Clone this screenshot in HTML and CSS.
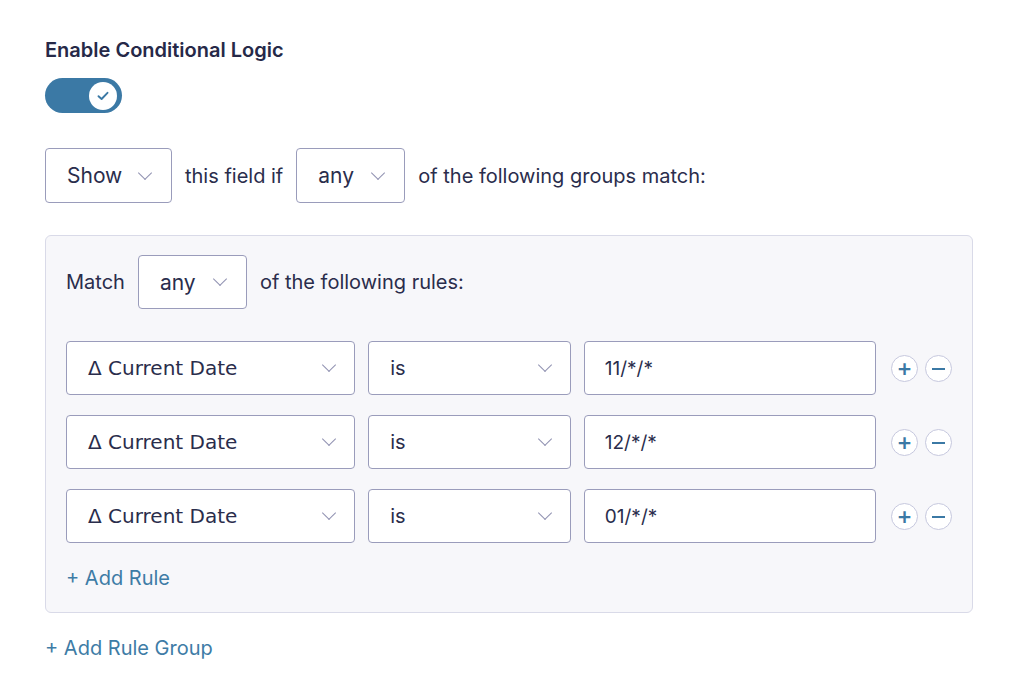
FILE: index.html
```html
<!DOCTYPE html>
<html lang="en">
<head>
    <meta charset="UTF-8">
    <title>Conditional Logic</title>
    <link rel="stylesheet" href="styles.css">
</head>
<body>
    <div class="panel">
        <div class="setting-label">Enable Conditional Logic</div>
        <div class="toggle">
            <span class="knob">
                <svg width="12" height="10" viewBox="0 0 12 10"><path d="M1.5 5.2 L4.6 8 L10.5 1.8" fill="none" stroke="#3b79a5" stroke-width="1.9" stroke-linecap="round" stroke-linejoin="round"/></svg>
            </span>
        </div>

        <div class="sentence">
            <div class="select select-show">Show<span class="chev"></span></div>
            <span class="words">this field if</span>
            <div class="select select-any">any<span class="chev"></span></div>
            <span class="words">of the following groups match:</span>
        </div>

        <div class="group">
            <div class="sentence group-head">
                <span class="words">Match</span>
                <div class="select select-any">any<span class="chev"></span></div>
                <span class="words">of the following rules:</span>
            </div>

            <div class="rule">
                <div class="select field-select">&Delta; Current Date<span class="chev"></span></div>
                <div class="select op-select">is<span class="chev"></span></div>
                <div class="value">11/*/*</div>
                <div class="actions">
                    <span class="round-btn">+</span>
                    <span class="round-btn minus"></span>
                </div>
            </div>
            <div class="rule">
                <div class="select field-select">&Delta; Current Date<span class="chev"></span></div>
                <div class="select op-select">is<span class="chev"></span></div>
                <div class="value">12/*/*</div>
                <div class="actions">
                    <span class="round-btn">+</span>
                    <span class="round-btn minus"></span>
                </div>
            </div>
            <div class="rule">
                <div class="select field-select">&Delta; Current Date<span class="chev"></span></div>
                <div class="select op-select">is<span class="chev"></span></div>
                <div class="value">01/*/*</div>
                <div class="actions">
                    <span class="round-btn">+</span>
                    <span class="round-btn minus"></span>
                </div>
            </div>

            <div class="add-link add-rule">+ Add Rule</div>
        </div>

        <div class="add-link add-group">+ Add Rule Group</div>
    </div>
</body>
</html>
```

FILE: styles.css
```css
body {
    margin: 0;
    background: #fff;
    font-family: Inter, "Noto Sans", sans-serif;
    color: #2a2d4c;
}
.panel {
    padding: 38px 0 0 45px;
    width: 928px;
}
.setting-label {
    font-size: 20px;
    font-weight: 600;
    line-height: 24px;
    color: #262948;
}
.toggle {
    margin-top: 16px;
    width: 77px;
    height: 35px;
    border-radius: 18px;
    background: #3b79a5;
    display: flex;
    align-items: center;
    justify-content: flex-end;
    padding-right: 5px;
    box-sizing: border-box;
}
.knob {
    width: 28px;
    height: 28px;
    border-radius: 50%;
    background: #fff;
    display: flex;
    align-items: center;
    justify-content: center;
}
.sentence {
    margin-top: 35px;
    display: flex;
    align-items: center;
    gap: 13px;
}
.words {
    font-size: 20px;
}
.select {
    box-sizing: border-box;
    height: 55px;
    border: 1px solid #9a9cbb;
    border-radius: 4px;
    background: #fff;
    display: flex;
    align-items: center;
    font-size: 21px;
    padding: 0 21px 0 21px;
    position: relative;
}
.chev {
    width: 9px;
    height: 9px;
    border-right: 1.6px solid #9092b2;
    border-bottom: 1.6px solid #9092b2;
    transform: rotate(45deg);
    margin-left: auto;
    margin-top: -6px;
}
.select-show {
    width: 127px;
}
.select-any {
    width: 109px;
}
.group {
    margin-top: 32px;
    background: #f7f7fa;
    border: 1px solid #d9dae8;
    border-radius: 6px;
    padding: 19px 20px 0 20px;
    height: 378px;
    box-sizing: border-box;
}
.group-head {
    margin-top: 0;
    height: 54px;
}
.group-head .select {
    height: 54px;
}
.rule {
    display: flex;
    align-items: center;
    gap: 13px;
    margin-top: 20px;
}
.group-head + .rule {
    margin-top: 32px;
}
.rule .select {
    height: 54px;
    padding-right: 20px;
}
.field-select {
    width: 290px;
    font-family: "DejaVu Sans", sans-serif;
    font-size: 20px;
}
.op-select {
    width: 203px;
    font-size: 20px;
}
.value {
    box-sizing: border-box;
    width: 293px;
    height: 54px;
    border: 1px solid #9a9cbb;
    border-radius: 4px;
    background: #fff;
    font-size: 19px;
    display: flex;
    align-items: center;
    padding-left: 20px;
}
.actions {
    display: flex;
    gap: 7px;
    margin-left: 2px;
}
.round-btn {
    box-sizing: border-box;
    width: 27px;
    height: 27px;
    border-radius: 50%;
    border: 1px solid #c6c8de;
    background: #fff;
    color: #3b79a5;
    font-size: 24px;
    font-weight: 500;
    line-height: 24px;
    text-align: center;
    position: relative;
}
.minus::after {
    content: "";
    position: absolute;
    left: 6px;
    right: 6px;
    top: 12px;
    height: 2px;
    background: #3b79a5;
}
.add-link {
    color: #3e7ca6;
    font-size: 20px;
}
.add-rule {
    margin-top: 23px;
}
.add-group {
    margin-top: 23px;
}
```
